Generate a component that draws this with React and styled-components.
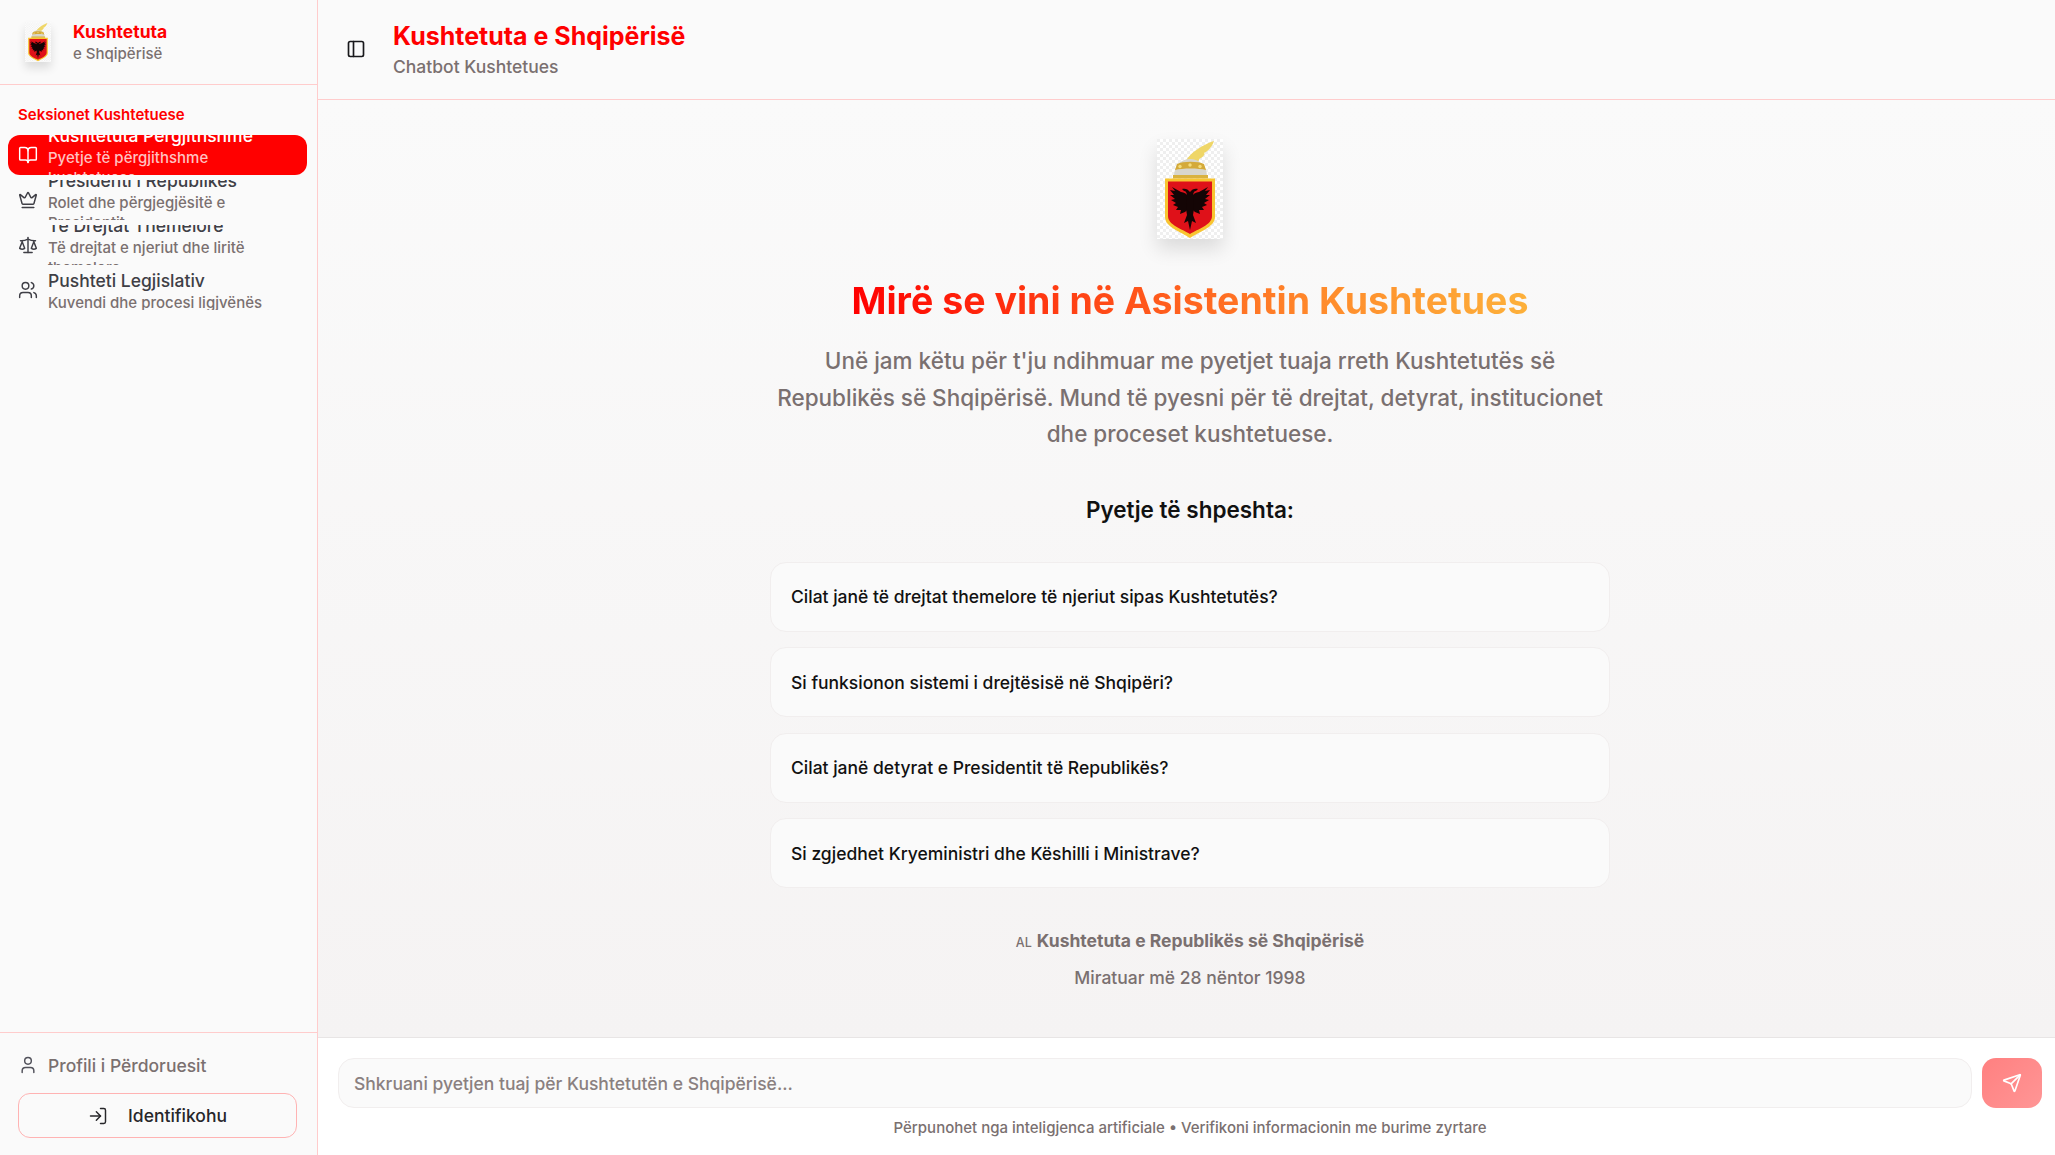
import React from 'react'
import styled, { createGlobalStyle } from 'styled-components'
import { BookOpen, Crown, Scale, Users, User, LogIn, PanelLeft, Send } from 'lucide-react'

const Global = createGlobalStyle`
  html, body { margin: 0; padding: 0; height: 100%; overflow: hidden; }
  body { font-family: Inter, "Liberation Sans", sans-serif; font-weight: 500; background: #fafafa; }
  * { box-sizing: border-box; }
`

const Page = styled.div`
  display: flex;
  width: 2055px;
  height: 1155px;
  overflow: hidden;
`

const Sidebar = styled.aside`
  flex: 0 0 318px;
  display: flex;
  flex-direction: column;
  background: #fafafa;
  border-right: 1px solid #ffcccc;
`

const Brand = styled.div`
  height: 85px;
  flex: none;
  display: flex;
  align-items: center;
  gap: 22px;
  padding: 0 0 0 25px;
  border-bottom: 1px solid #ffcccc;
`

const BrandText = styled.div`
  margin-bottom: 2px;
`

const BrandTitle = styled.div`
  color: #ff0000;
  font-size: 17.5px;
  line-height: 25px;
  font-weight: 700;
`

const BrandSub = styled.div`
  color: #7a7070;
  font-size: 15px;
  line-height: 20px;
`

const Nav = styled.nav`
  flex: 1;
  padding: 19px 10px 0 8px;
`

const NavLabel = styled.div`
  color: #ff0000;
  font-size: 15px;
  font-weight: 600;
  line-height: 22px;
  padding-left: 10px;
  margin-bottom: 9px;
`

const NavList = styled.div`
  display: flex;
  flex-direction: column;
  gap: 5px;
`

const NavItem = styled.div`
  height: 40px;
  display: flex;
  align-items: center;
  gap: 10px;
  padding: 0 10px;
  overflow: hidden;
  border-radius: 12px;
  background: ${p => (p.$active ? '#ff0000' : 'transparent')};
  color: ${p => (p.$active ? '#fff' : '#3f3f46')};
  svg { flex: none; }
`

const NavText = styled.div`
  min-width: 0;
`

const NavTitle = styled.div`
  font-size: 17.5px;
  line-height: 25px;
  white-space: nowrap;
`

const NavDesc = styled.div`
  font-size: 15px;
  line-height: 20px;
  color: ${p => (p.$active ? '#ffc2c2' : '#7a7070')};
`

const SideFooter = styled.div`
  flex: none;
  height: 123px;
  padding: 18px 18px 0;
  border-top: 1px solid #ffcccc;
`

const ProfileRow = styled.div`
  display: flex;
  align-items: center;
  gap: 10px;
  height: 28px;
  color: #7a7070;
  font-size: 17.5px;
`

const LoginBtn = styled.button`
  width: 279px;
  height: 45px;
  margin-top: 14px;
  display: flex;
  align-items: center;
  justify-content: center;
  gap: 20px;
  background: transparent;
  border: 1px solid #ffb3b3;
  border-radius: 12px;
  color: #27272a;
  font: 500 17.5px Inter, sans-serif;
`

const Main = styled.main`
  flex: 0 0 1744px;
  display: flex;
  flex-direction: column;
  height: 1155px;
`

const Header = styled.header`
  flex: none;
  height: 100px;
  display: flex;
  align-items: center;
  gap: 27px;
  padding: 0 0 2px 28px;
  background: #fafafa;
  border-bottom: 1px solid #ffcccc;
`

const HeaderTitle = styled.h1`
  margin: 0;
  color: #ff0000;
  font-size: 25px;
  line-height: 35px;
  font-weight: 700;
`

const HeaderSub = styled.div`
  color: #7a7070;
  font-size: 17.5px;
  line-height: 25px;
`

const Body = styled.div`
  flex: 1;
  display: flex;
  flex-direction: column;
  align-items: center;
  padding-top: 39px;
  background: linear-gradient(180deg, #fafafa 0%, #f5f3f3 100%);
`

const LogoFrame = styled.div`
  flex: none;
  width: ${p => (p.$small ? 26 : 66)}px;
  height: ${p => (p.$small ? 40 : 100)}px;
  box-shadow: 0 ${p => (p.$small ? 6 : 10)}px ${p => (p.$small ? 10 : 18)}px rgba(0, 0, 0, 0.12);
  svg { display: block; width: 100%; height: 100%; filter: blur(0.4px); }
`

const WelcomeTitle = styled.h2`
  margin: 37px 0 0;
  font-size: 37.5px;
  line-height: 50px;
  font-weight: 700;
  background: linear-gradient(90deg, #ff0000 0%, #ff8c2c 70%, #fdb03a 100%);
  -webkit-background-clip: text;
  background-clip: text;
  color: transparent;
`

const Intro = styled.p`
  width: 840px;
  margin: 17px 0 0;
  text-align: center;
  color: #7a7070;
  font-size: 22.5px;
  line-height: 36.56px;
`

const QuickTitle = styled.h3`
  margin: 42px 0 0;
  font-size: 22.5px;
  line-height: 30px;
  font-weight: 600;
  color: #111;
`

const Questions = styled.div`
  width: 840px;
  margin-top: 37px;
  display: flex;
  flex-direction: column;
  gap: 15.5px;
`

const Question = styled.div`
  height: 70px;
  display: flex;
  align-items: center;
  padding: 0 20px;
  background: #fafafa;
  border: 1px solid #f1eeee;
  border-radius: 16px;
  font-size: 17.5px;
  color: #111;
`

const Note = styled.div`
  margin-top: 36px;
  text-align: center;
  color: #7a7070;
  font-size: 17.5px;
  line-height: 34.5px;
`

const NoteStrong = styled.strong`
  font-weight: 700;
`

const Flag = styled.span`
  font-size: 12.5px;
  margin-right: 5px;
`

const Composer = styled.footer`
  flex: none;
  height: 118px;
  padding: 20px 20px 0;
  background: #fff;
  border-top: 1px solid #e8e5e5;
`

const ComposerRow = styled.div`
  display: flex;
  gap: 10px;
`

const Field = styled.input`
  flex: 1;
  height: 50px;
  padding: 0 15px;
  background: #fafafa;
  border: 1px solid #f1eeee;
  border-radius: 16px;
  font: 500 17.5px Inter, sans-serif;
  &::placeholder { color: #8a8080; }
`

const SendBtn = styled.button`
  flex: none;
  width: 60px;
  height: 50px;
  display: flex;
  align-items: center;
  justify-content: center;
  border: none;
  border-radius: 14px;
  background: linear-gradient(135deg, #ff8080, #ff9696);
  color: #fff;
`

const Disclaimer = styled.div`
  margin-top: 10px;
  text-align: center;
  color: #7a7070;
  font-size: 15px;
  line-height: 20px;
`

// wing feathers on one side, mirrored for the other
const wing = 'M33 59 C30 55 27 53 24 53 L15 48 L18 52 L13 51 L17 56 L13 56 L18 60 L14 61 L19 64 L16 66 L21 68 L19 71 L24 71 L23 75 L28 73 L31 70 L33 70Z'

function Emblem() {
  return (
    <svg viewBox="0 0 66 100">
      <defs>
        <pattern id="chk" width="6" height="6" patternUnits="userSpaceOnUse">
          <rect width="6" height="6" fill="#fff" />
          <rect width="3" height="3" fill="#efefef" />
          <rect x="3" y="3" width="3" height="3" fill="#efefef" />
        </pattern>
      </defs>
      <rect width="66" height="100" fill="url(#chk)" />
      <path d="M28 25 C29 17 44 6 57 2 C55 8 51 12 47 14 C49 15 45 19 42 20 C43 23 37 24 28 25Z" fill="#efd667" />
      <path d="M17 37 C17 27 24 20 33 20 C42 20 50 27 50 37Z" fill="#d8d6cc" />
      <path d="M20 25 C26 22 41 22 47 25 L49 31 C42 29 25 29 18 31Z" fill="#d4aa3a" />
      <circle cx="23" cy="27.5" r="1.7" fill="#f5dd7a" />
      <circle cx="33" cy="26" r="1.7" fill="#f5dd7a" />
      <circle cx="43" cy="27.5" r="1.7" fill="#f5dd7a" />
      <rect x="16" y="36" width="35" height="3.5" fill="#d9b23f" />
      <path d="M8 39.5 H58 V78 C58 88 42 93 33 99 C24 93 8 88 8 78Z" fill="#f8c531" />
      <path d="M11 42.5 H55 V77 C55 86 41 90 33 95 C25 90 11 86 11 77Z" fill="#df1119" />
      <path d={wing} fill="#140505" />
      <path d={wing} fill="#140505" transform="matrix(-1 0 0 1 66 0)" />
      <path d="M33 53 C31 50 28 49 25 50 L27 52 C29 52 30 54 30 57 L29 70 L30 76 L27 84 L31 82 L33 91 L35 82 L39 84 L36 76 L37 70 L36 57 C36 54 37 52 39 52 L41 50 C38 49 35 50 33 53Z" fill="#140505" />
    </svg>
  )
}

const sections = [
  { Icon: BookOpen, title: 'Kushtetuta Përgjithshme', desc: 'Pyetje të përgjithshme kushtetuese', active: true },
  { Icon: Crown, title: 'Presidenti i Republikës', desc: 'Rolet dhe përgjegjësitë e Presidentit' },
  { Icon: Scale, title: 'Të Drejtat Themelore', desc: 'Të drejtat e njeriut dhe liritë themelore' },
  { Icon: Users, title: 'Pushteti Legjislativ', desc: 'Kuvendi dhe procesi ligjvënës' },
]

const questions = [
  'Cilat janë të drejtat themelore të njeriut sipas Kushtetutës?',
  'Si funksionon sistemi i drejtësisë në Shqipëri?',
  'Cilat janë detyrat e Presidentit të Republikës?',
  'Si zgjedhet Kryeministri dhe Këshilli i Ministrave?',
]

export default function App() {
  return (
    <Page>
      <Global />
      <Sidebar>
        <Brand>
          <LogoFrame $small>
            <Emblem />
          </LogoFrame>
          <BrandText>
            <BrandTitle>Kushtetuta</BrandTitle>
            <BrandSub>e Shqipërisë</BrandSub>
          </BrandText>
        </Brand>
        <Nav>
          <NavLabel>Seksionet Kushtetuese</NavLabel>
          <NavList>
            {sections.map(({ Icon, title, desc, active }) => (
              <NavItem key={title} $active={active}>
                <Icon size={20} strokeWidth={1.75} />
                <NavText>
                  <NavTitle>{title}</NavTitle>
                  <NavDesc $active={active}>{desc}</NavDesc>
                </NavText>
              </NavItem>
            ))}
          </NavList>
        </Nav>
        <SideFooter>
          <ProfileRow>
            <User size={20} strokeWidth={1.75} color="#52525b" />
            Profili i Përdoruesit
          </ProfileRow>
          <LoginBtn>
            <LogIn size={20} strokeWidth={1.75} />
            Identifikohu
          </LoginBtn>
        </SideFooter>
      </Sidebar>
      <Main>
        <Header>
          <PanelLeft size={20} strokeWidth={2} color="#18181b" />
          <div>
            <HeaderTitle>Kushtetuta e Shqipërisë</HeaderTitle>
            <HeaderSub>Chatbot Kushtetues</HeaderSub>
          </div>
        </Header>
        <Body>
          <LogoFrame>
            <Emblem />
          </LogoFrame>
          <WelcomeTitle>Mirë se vini në Asistentin Kushtetues</WelcomeTitle>
          <Intro>
            Unë jam këtu për t'ju ndihmuar me pyetjet tuaja rreth Kushtetutës së Republikës së Shqipërisë. Mund të pyesni për të drejtat, detyrat, institucionet dhe proceset kushtetuese.
          </Intro>
          <QuickTitle>Pyetje të shpeshta:</QuickTitle>
          <Questions>
            {questions.map(q => <Question key={q}>{q}</Question>)}
          </Questions>
          <Note>
            <div><Flag>AL</Flag><NoteStrong>Kushtetuta e Republikës së Shqipërisë</NoteStrong></div>
            <div>Miratuar më 28 nëntor 1998</div>
          </Note>
        </Body>
        <Composer>
          <ComposerRow>
            <Field placeholder="Shkruani pyetjen tuaj për Kushtetutën e Shqipërisë..." />
            <SendBtn><Send size={20} strokeWidth={2} /></SendBtn>
          </ComposerRow>
          <Disclaimer>Përpunohet nga inteligjenca artificiale • Verifikoni informacionin me burime zyrtare</Disclaimer>
        </Composer>
      </Main>
    </Page>
  )
}
